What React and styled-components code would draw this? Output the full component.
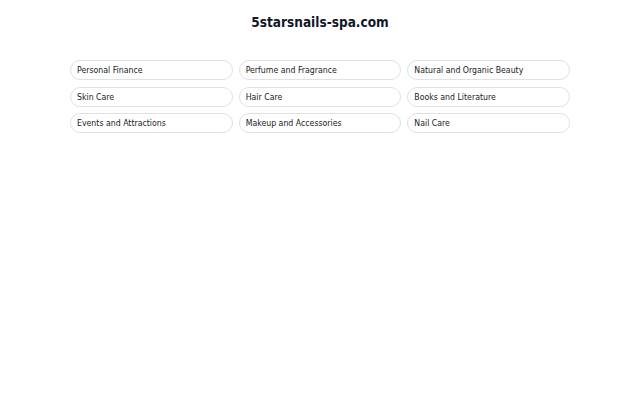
import React from "react";
import styled, { createGlobalStyle } from "styled-components";

const Global = createGlobalStyle`
  html, body { margin: 0; padding: 0; background: #fff; }
  body { font-family: "DejaVu Sans Condensed", "DejaVu Sans", sans-serif; color: #1f2328; }
`;

const Page = styled.div`
  display: flex;
  flex-direction: column;
  align-items: center;
  padding-top: 13px;
`;

const Title = styled.h1`
  margin: 0;
  font-size: 13.5px;
  font-weight: 700;
  color: #111827;
  line-height: 18px;
`;

const Grid = styled.div`
  margin-top: 29px;
  width: 500px;
  display: grid;
  grid-template-columns: repeat(3, 1fr);
  column-gap: 6px;
  row-gap: 6.5px;
`;

const Chip = styled.div`
  height: 20px;
  box-sizing: border-box;
  border: 1px solid #dfe1e4;
  border-radius: 10px;
  padding: 0 6px;
  display: flex;
  align-items: center;
  font-size: 8.7px;
  color: #1a1a1a;
`;

const items = [
  "Personal Finance",
  "Perfume and Fragrance",
  "Natural and Organic Beauty",
  "Skin Care",
  "Hair Care",
  "Books and Literature",
  "Events and Attractions",
  "Makeup and Accessories",
  "Nail Care",
];

export default function App() {
  return (
    <>
      <Global />
      <Page>
        <Title>5starsnails-spa.com</Title>
        <Grid>
          {items.map((t) => (
            <Chip key={t}>{t}</Chip>
          ))}
        </Grid>
      </Page>
    </>
  );
}
